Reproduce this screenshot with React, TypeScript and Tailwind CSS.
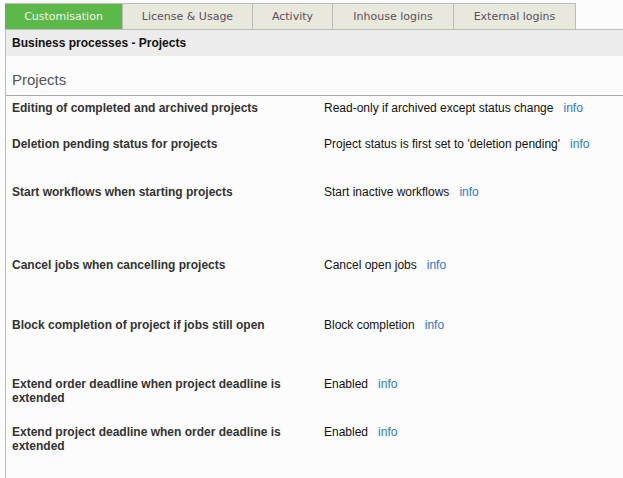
import React from 'react';

const tabs = [
  { label: 'Customisation', w: 'w-[118px]', active: true },
  { label: 'License & Usage', w: 'w-[130px]' },
  { label: 'Activity', w: 'w-[80px]' },
  { label: 'Inhouse logins', w: 'w-[121px]' },
  { label: 'External logins', w: 'w-[122px]' },
];

const rows = [
  { label: 'Editing of completed and archived projects', value: 'Read-only if archived except status change', h: 'h-[36px]' },
  { label: 'Deletion pending status for projects', value: "Project status is first set to 'deletion pending'", h: 'h-[48px]' },
  { label: 'Start workflows when starting projects', value: 'Start inactive workflows', h: 'h-[73px]' },
  { label: 'Cancel jobs when cancelling projects', value: 'Cancel open jobs', h: 'h-[60px]' },
  { label: 'Block completion of project if jobs still open', value: 'Block completion', h: 'h-[59px]' },
  { label: 'Extend order deadline when project deadline is extended', value: 'Enabled', h: 'h-[48px]' },
  { label: 'Extend project deadline when order deadline is extended', value: 'Enabled', h: 'h-[54px]' },
];

const App = () => {
  return (
    <div className="w-[623px] h-[478px] overflow-hidden bg-[#fcfcfc] font-['Liberation_Sans',Arial,sans-serif]">
      {/* tabs */}
      <div className="flex pl-[5px] pt-[3px] h-[29px]">
        {tabs.map((t) =>
          t.active ? (
            <div
              key={t.label}
              className={`${t.w} h-[26px] pt-[2px] flex items-center justify-center bg-[#5cb848] border-t border-r border-[#bbb] text-[#f4f4f4] text-[11px] font-['DejaVu_Sans',Verdana,sans-serif]`}
            >
              {t.label}
            </div>
          ) : (
            <div
              key={t.label}
              className={`${t.w} h-[26px] pt-[2px] flex items-center justify-center bg-[#e8e8dc] border-t border-r border-[#bbb] text-[#5b4f5f] text-[11px] font-['DejaVu_Sans',Verdana,sans-serif]`}
            >
              {t.label}
            </div>
          )
        )}
      </div>

      <div className="ml-[5px] border-l border-t border-[#bbb] h-full">
        <div className="h-[26px] bg-[#ececec] pl-[6px] flex items-center text-[12px] font-bold text-[#111]">
          Business processes - Projects
        </div>

        <div className="h-[40px] pt-[15px] pl-[6px] border-b border-[#a8a8a8] text-[15px] leading-[18px] text-[#555]">
          Projects
        </div>

        {rows.map((r) => (
          <div key={r.label} className={`flex ${r.h} pt-[5px] text-[12px] leading-[14px]`}>
            <div className="w-[318px] pl-[6px] pr-[20px] font-bold text-[#333]">{r.label}</div>
            <div className="flex gap-[10px] text-[#111]">
              <span>{r.value}</span>
              <a className="text-[#2b79c2]">info</a>
            </div>
          </div>
        ))}
      </div>
    </div>
  );
};

export default App;
